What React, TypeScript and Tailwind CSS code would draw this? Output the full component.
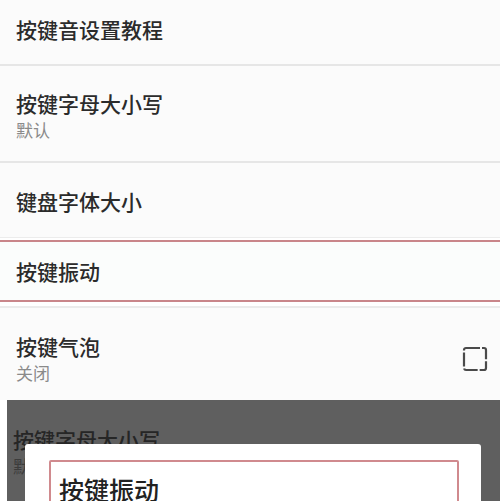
import React from 'react';

const font = { fontFamily: '"Noto Sans CJK SC", "Noto Sans", sans-serif' };

function Row({ title, sub, className, right }: { title: string; sub?: string; className: string; right?: React.ReactNode }) {
  return (
    <div className={`flex items-center justify-between pl-4 pr-3 bg-[#fbfbfb] ${className}`}>
      <div className="flex flex-col">
        <span className="text-[21px] leading-[28px] font-medium text-[#2b2b2b]">{title}</span>
        {sub && <span className="text-[17px] leading-[26px] text-[#8a8a8a]">{sub}</span>}
      </div>
      {right}
    </div>
  );
}

function CheckOutline() {
  return (
    <svg width="26" height="26" viewBox="0 0 26 26">
      <rect x="2" y="2" width="22" height="22" rx="2" fill="none" stroke="#4a4a4a" strokeWidth="2.2" strokeDasharray="14 2" />
    </svg>
  );
}

export default function App() {
  return (
    <div style={font} className="w-[500px] h-[501px] overflow-hidden bg-white flex flex-col">
      <Row title="按键音设置教程" className="h-[64px] pb-[6px]" />
      <div className="h-[2px] bg-[#e6e6e6]" />
      <Row title="按键字母大小写" sub="默认" className="h-[95px] pt-[4px]" />
      <div className="h-[2px] bg-[#e6e6e6]" />
      <Row title="键盘字体大小" className="h-[74px] pt-[2px]" />
      <div className="h-[1px] bg-[#ececec]" />
      <div className="h-[2px] bg-white" />
      <div className="border-y-2 border-[#c9868a] bg-[#fbfdfc]">
        <Row title="按键振动" className="h-[58px] bg-[#fbfdfc]" />
      </div>
      <div className="h-[4px] bg-white" />
      <div className="h-[2px] bg-[#ebebeb]" />
      <Row title="按键气泡" sub="关闭" right={<CheckOutline />} className="h-[92px] pt-[10px]" />
      <div className="relative flex-1 ml-[7px] bg-[#5f5f5f] pl-[6px] pt-[26px]">
        <div className="text-[21px] leading-[26px] font-medium text-[#262626]">按键字母大小写</div>
        <div className="text-[17px] leading-[24px] text-[#3c3c3c] mt-[2px]">默认</div>
        <div className="absolute left-[18px] top-[44px] w-[456px] h-[80px] bg-white rounded-t-[3px] pl-[24px] pt-[16px]">
          <div className="w-[410px] h-[60px] border-2 border-[#d08a8e] rounded-[2px] pl-[8px] pt-[12px]">
            <span className="text-[25px] leading-[30px] font-medium text-[#222]">按键振动</span>
          </div>
        </div>
      </div>
    </div>
  );
}
